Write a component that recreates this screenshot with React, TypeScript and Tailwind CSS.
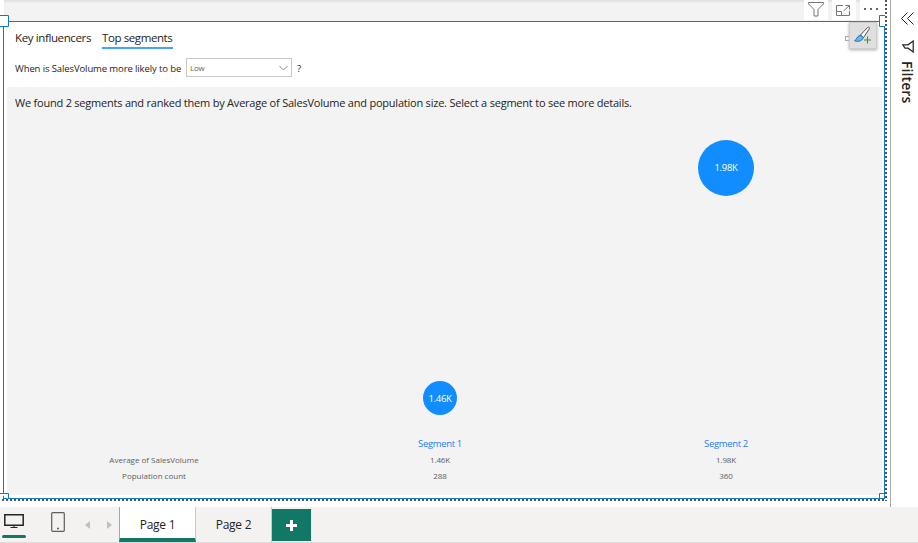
import type { ReactNode } from 'react';

const segments = [
  { name: 'Segment 1', average: '1.46K', population: '288', bubble: 'mt-[265px] size-[34px]' },
  { name: 'Segment 2', average: '1.98K', population: '360', bubble: 'mt-[23.500px] size-[56px]' },
];

function HeaderButton({ children, className = '' }: { children: ReactNode; className?: string }) {
  return <div className={`flex h-5 w-6 items-center justify-center bg-white text-[#777] ${className}`}>{children}</div>;
}

function VisualHeader() {
  return (
    <div className="ml-1 flex h-[21px] w-[881px] justify-end gap-1 bg-[#f3f3f3] shadow-[inset_0_2px_2px_#e2e2e2]">
      <HeaderButton>
        <svg width="18" height="18" viewBox="0 0 18 18" fill="none" stroke="currentColor" className="-mt-0.5">
          <path d="M1.500 2.500h15v1.300l-5.500 5.700v6.500H7V9.500L1.500 3.800z" />
        </svg>
      </HeaderButton>
      <HeaderButton className="pr-[2px]">
        <svg width="16" height="14" viewBox="0 0 16 14" fill="none" stroke="currentColor" className="-mt-[1px]">
          <path d="M8 2.500H1.500v10h13V8M1.500 8.500h5v4M8.500 8l6-5.500M10.500 2.500h4v4" />
        </svg>
      </HeaderButton>
      <HeaderButton className="w-[25px] gap-[4px] pb-[2px] pr-[3px]">
        <i className="size-[2px] bg-[#666]" />
        <i className="size-[2px] bg-[#666]" />
        <i className="size-[2px] bg-[#666]" />
      </HeaderButton>
    </div>
  );
}

function Visual() {
  return (
    <section className="relative ml-[3px] h-[478px] w-[882px] border border-[#1078cf] bg-white pl-[3px] pr-[2px]">
      <div className="flex h-[27px] items-end gap-[11px] pl-2 text-[11.500px] text-[#252423]">
        <div className="h-[19px] w-[76px] whitespace-nowrap leading-[16px] tracking-[-0.380px]">Key influencers</div>
        <div className="h-[19px] w-[71px] whitespace-nowrap border-b-2 border-[#46a2fa] leading-[16px] tracking-[-0.400px]">Top segments</div>
      </div>
      <div className="flex h-[38px] items-center pb-[1px] pl-2 text-[9.500px] text-[#252423]">
        <span className="w-[171px] whitespace-nowrap pt-[3px] tracking-[-0.110px]">When is SalesVolume more likely to be</span>
        <div className="flex h-[19px] w-[106px] items-center justify-between border border-[#c8c8c8] px-[3px] text-[8px] tracking-[-0.200px] text-[#666]">
          Low
          <svg width="9" height="6" viewBox="0 0 9 6" fill="none" stroke="#888"><path d="M.5 1l4 4 4-4" /></svg>
        </div>
        <span className="ml-[5px] pt-[3px]">?</span>
      </div>
      <div className="h-[408px] w-[875px] bg-[#f3f3f3]">
        <p className="h-[29px] whitespace-nowrap pl-2 pt-2 text-[11px] leading-[16px] tracking-[-0.217px] text-[#252423]">
          We found 2 segments and ranked them by Average of SalesVolume and population size. Select a segment to see more details.
        </p>
        <div className="flex h-[379px] pl-[4px] text-center text-[8px] text-[#605e5c]">
          <div className="flex w-[286px] flex-col justify-end pb-[11px] leading-4">
            <span>Average of SalesVolume</span>
            <span>Population count</span>
          </div>
          {segments.map((s) => (
            <div key={s.name} className="flex w-[286px] flex-col items-center pb-[11px] leading-4">
              <div className={`flex shrink-0 items-center justify-center rounded-full bg-[#118dff] pt-[1px] text-[9.500px] tracking-[-0.300px] text-white ${s.bubble}`}>{s.average}</div>
              <span className="mt-auto h-[16px] text-[9.500px] tracking-[-0.330px] text-[#2b7cf6]">{s.name}</span>
              <span className="tracking-[-0.150px]">{s.average}</span>
              <span>{s.population}</span>
            </div>
          ))}
        </div>
      </div>
      <svg className="absolute -left-[4px] -top-[7px]" width="9" height="12" viewBox="0 0 9 12" fill="#fff" stroke="#1078cf"><path d="M0 .5h8.500v11H0" /></svg>
      <svg className="absolute -right-[1px] -top-[7px]" width="6" height="12" viewBox="0 0 6 12" fill="#fff" stroke="#1078cf"><path d="M6 .5H.5v11H6" /></svg>
      <svg className="absolute -bottom-[1px] -left-[4px]" width="9" height="6" viewBox="0 0 9 6" fill="#fff" stroke="#1078cf"><path d="M0 .5h8.500V6" /></svg>
      <svg className="absolute -bottom-[1px] -right-[1px]" width="6" height="6" viewBox="0 0 6 6" fill="#fff" stroke="#1078cf"><path d="M6 .5H.5V6" /></svg>
      <div className="absolute right-[34px] top-[14px] h-[5px] w-[5px] border border-[#aaa]" />
      <div className="absolute right-[7px] top-0 flex h-[27px] w-[28px] items-center justify-center border border-[#d0cecc] bg-[#e1dfdd] shadow-[0_1px_3px_#aaa]">
        <svg width="20" height="20" viewBox="0 0 20 20" fill="none" className="-mt-[1px]">
          <path d="M7.500 10l7-7.500c1.500-1 2.500.2 1.700 1.600L10.500 12.500z" fill="#fff" stroke="#555" />
          <path d="M1.500 15.700c2.500-.3 2-4.800 5.500-5.200 2-.1 3.500 1.500 2.800 3.300C8.500 16.400 4 17 1.500 15.700z" fill="#6db5ec" stroke="#1976c2" />
          <path d="M14.500 11.500v7M11 15h7" stroke="#2f9a4b" strokeWidth="1.100" />
        </svg>
      </div>
    </section>
  );
}

function FiltersPane() {
  return (
    <aside className="flex w-[28px] flex-col items-center border-l border-[#a6a6a6] bg-white pl-[5px] pt-[12px] text-[#252423]">
      <svg width="13" height="13" viewBox="0 0 13 13" fill="none" stroke="currentColor"><path d="M6.500.5l-6 6 6 6M12.500.5l-6 6 6 6" /></svg>
      <svg className="mt-[15px] ml-[2px]" width="12" height="13" viewBox="0 0 12 13" fill="none" stroke="currentColor" strokeWidth="1.200"><path d="M11.200 1v11L6 8.200H3L.8 4.800H6z" /></svg>
      <span className="mt-[8px] text-[14px] font-semibold leading-[18px] tracking-[0.100px] [writing-mode:vertical-rl]">Filters</span>
    </aside>
  );
}

function PageBar() {
  return (
    <footer className="flex h-9 border-b border-[#dcdcdc] bg-[#f3f2f1] text-[12px] text-[#252423]">
      <div className="flex h-[31px] w-[28px] flex-col items-center justify-between pt-[7px]">
        <svg width="20" height="14" viewBox="0 0 20 14" fill="none" stroke="#252423" className="-ml-[1px]"><path d="M.8.8h18.400v10.400H.8z" strokeWidth="1.500" /><path d="M10 11v2.500M6.500 13.500h7" /></svg>
        <div className="h-[3px] w-6 rounded-full bg-[#117865]" />
      </div>
      <svg className="ml-[23px] mt-[5px]" width="14" height="20" viewBox="0 0 14 20" fill="none" stroke="#605e5c"><rect x=".7" y=".7" width="12.600" height="18.600" rx="1" strokeWidth="1.200" /><path d="M6 16.500h2" strokeWidth="1.500" /></svg>
      <div className="ml-[20px] mt-[14px] flex gap-[17px]">
        <svg width="5" height="8" viewBox="0 0 5 8" fill="#c0c0c0"><path d="M5 0v8L0 4z" /></svg>
        <svg width="5" height="8" viewBox="0 0 5 8" fill="#c0c0c0"><path d="M0 0v8l5-4z" /></svg>
      </div>
      <div className="ml-[7px] w-[77px] border-b-4 border-l border-r border-b-[#117865] border-l-[#a6a6a6] border-r-[#c8c8c8] bg-white text-center leading-[35px] tracking-[-0.250px]">Page 1</div>
      <div className="w-[76px] border-r border-[#c8c8c8] text-center leading-[35px] tracking-[-0.250px]">Page 2</div>
      <div className="mt-[2px] flex h-8 w-[39px] items-center justify-center bg-[#117865]">
        <svg width="11" height="11" viewBox="0 0 11 11" stroke="#fff" strokeWidth="3"><path d="M5.500 0v11M0 5.500h11" /></svg>
      </div>
    </footer>
  );
}

export default function App() {
  return (
    <div className="flex h-[543px] w-[918px] flex-col overflow-hidden bg-white font-['Open_Sans','Noto_Sans',sans-serif]">
      <div className="flex h-[507px]">
        <main className="flex w-[890px]">
          <div className="w-[885px] shrink-0">
            <VisualHeader />
            <Visual />
            <div className="ml-[2px] h-[2px] bg-[repeating-linear-gradient(90deg,#555_0_2px,transparent_2px_4px)]" />
          </div>
          <div className="h-[501px] w-[2px] bg-[repeating-linear-gradient(180deg,#555_0_2px,transparent_2px_4px)]" />
        </main>
        <FiltersPane />
      </div>
      <PageBar />
    </div>
  );
}
